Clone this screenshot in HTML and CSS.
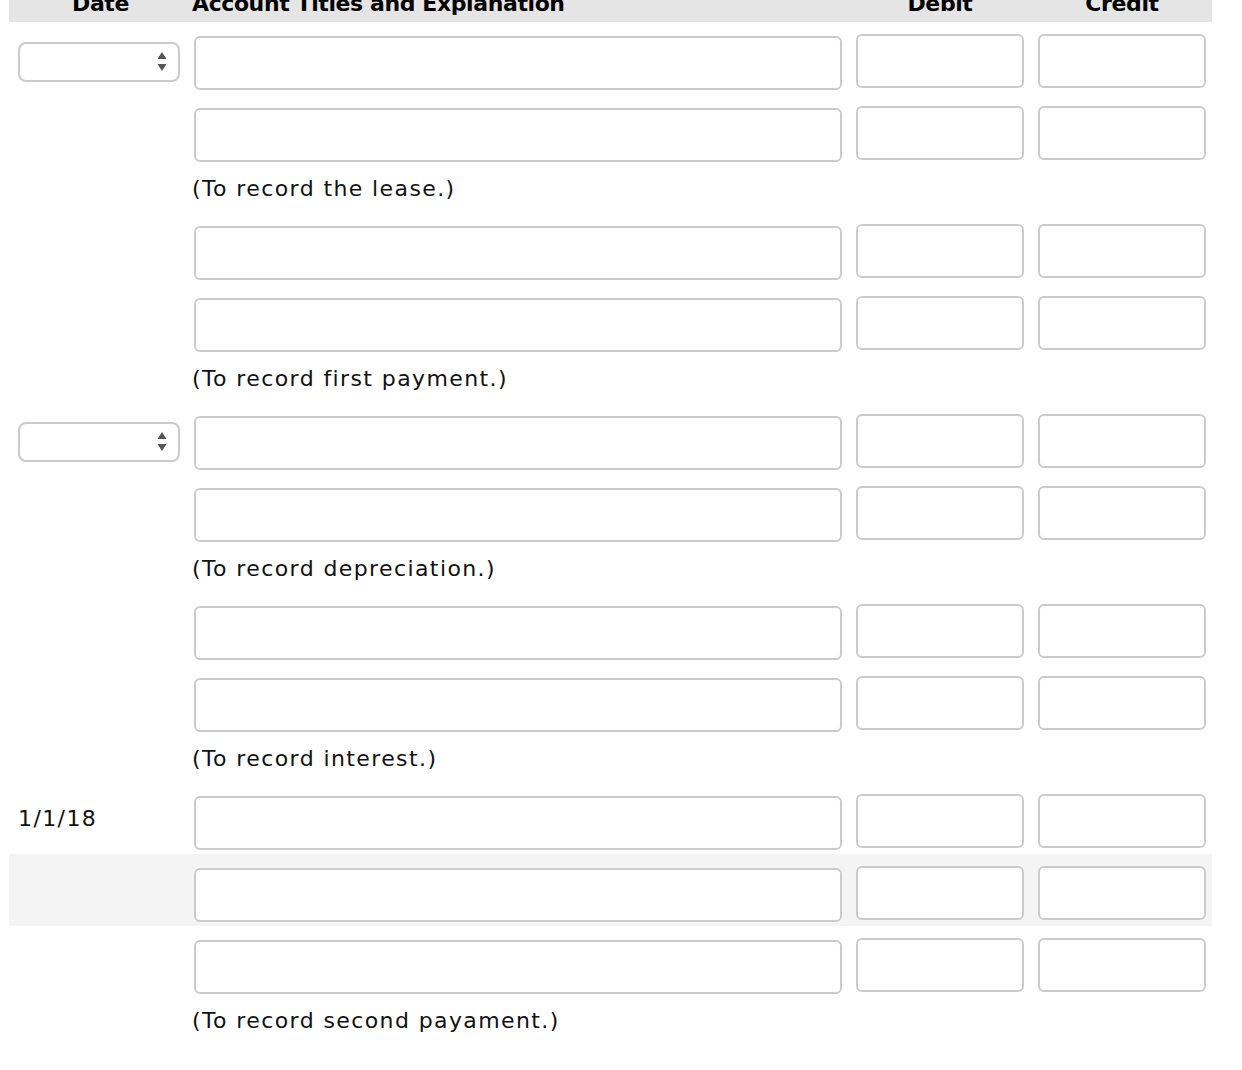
FILE: index.html
```html
<!DOCTYPE html>
<html lang="en">
  <head>
    <meta charset="UTF-8" />
    <title>Journal Entries</title>
    <link rel="stylesheet" href="styles.css">
  </head>
  <body>
    <div class="journal">
      <div class="journal-head">
        <div class="col-date">Date</div>
        <div class="col-account">Account Titles and Explanation</div>
        <div class="col-amount">Debit</div>
        <div class="col-amount">Credit</div>
      </div>

      <!-- entry 1 -->
      <div class="entry-row">
        <div class="date-cell">
          <div class="select-wrap">
            <select class="date-select"><option></option></select>
            <svg class="select-arrows" width="10" height="19" viewBox="0 0 10 19"><path d="M5 0 L9.5 7 L0.5 7 Z M0.5 12 L9.5 12 L5 19 Z" fill="#555"/></svg>
          </div>
        </div>
        <input class="account-input" type="text">
        <input class="amount-input" type="text">
        <input class="amount-input" type="text">
      </div>
      <div class="entry-row">
        <div class="date-cell"></div>
        <input class="account-input" type="text">
        <input class="amount-input" type="text">
        <input class="amount-input" type="text">
      </div>
      <div class="memo-row"><div></div><div class="memo">(To record the lease.)</div></div>

      <!-- entry 2 -->
      <div class="entry-row">
        <div class="date-cell"></div>
        <input class="account-input" type="text">
        <input class="amount-input" type="text">
        <input class="amount-input" type="text">
      </div>
      <div class="entry-row">
        <div class="date-cell"></div>
        <input class="account-input" type="text">
        <input class="amount-input" type="text">
        <input class="amount-input" type="text">
      </div>
      <div class="memo-row"><div></div><div class="memo">(To record first payment.)</div></div>

      <!-- entry 3 -->
      <div class="entry-row">
        <div class="date-cell">
          <div class="select-wrap">
            <select class="date-select"><option></option></select>
            <svg class="select-arrows" width="10" height="19" viewBox="0 0 10 19"><path d="M5 0 L9.5 7 L0.5 7 Z M0.5 12 L9.5 12 L5 19 Z" fill="#555"/></svg>
          </div>
        </div>
        <input class="account-input" type="text">
        <input class="amount-input" type="text">
        <input class="amount-input" type="text">
      </div>
      <div class="entry-row">
        <div class="date-cell"></div>
        <input class="account-input" type="text">
        <input class="amount-input" type="text">
        <input class="amount-input" type="text">
      </div>
      <div class="memo-row"><div></div><div class="memo">(To record depreciation.)</div></div>

      <!-- entry 4 -->
      <div class="entry-row">
        <div class="date-cell"></div>
        <input class="account-input" type="text">
        <input class="amount-input" type="text">
        <input class="amount-input" type="text">
      </div>
      <div class="entry-row">
        <div class="date-cell"></div>
        <input class="account-input" type="text">
        <input class="amount-input" type="text">
        <input class="amount-input" type="text">
      </div>
      <div class="memo-row"><div></div><div class="memo">(To record interest.)</div></div>

      <!-- entry 5 -->
      <div class="entry-row">
        <div class="date-cell date-text">1/1/18</div>
        <input class="account-input" type="text">
        <input class="amount-input" type="text">
        <input class="amount-input" type="text">
      </div>
      <div class="entry-row shaded">
        <div class="date-cell"></div>
        <input class="account-input" type="text">
        <input class="amount-input" type="text">
        <input class="amount-input" type="text">
      </div>
      <div class="entry-row">
        <div class="date-cell"></div>
        <input class="account-input" type="text">
        <input class="amount-input" type="text">
        <input class="amount-input" type="text">
      </div>
      <div class="memo-row"><div></div><div class="memo">(To record second payament.)</div></div>
    </div>
  </body>
</html>
```

FILE: styles.css
```css
body {
  margin: 0;
  font-family: "DejaVu Sans", Verdana, sans-serif;
  font-size: 22px;
  color: #111;
  background: #fff;
}
.journal {
  width: 1203px;
  margin-left: 9px;
  margin-top: -18px;
}
.journal-head,
.entry-row,
.memo-row {
  display: grid;
  grid-template-columns: 171px 648px 168px 168px;
  column-gap: 14px;
}
.journal-head {
  height: 40px;
  box-sizing: border-box;
  padding-top: 9px;
  line-height: 26px;
  background-color: #e5e5e5;
  font-weight: bold;
  letter-spacing: -0.4px;
  color: #000;
}
.col-date {
  text-align: center;
  padding-left: 12px;
}
.col-account {
  margin-left: -2px;
  white-space: nowrap;
}
.col-amount {
  text-align: center;
}

.entry-row {
  height: 72px;
}
.entry-row.shaded {
  background-color: #f4f4f4;
}
.account-input,
.amount-input {
  box-sizing: border-box;
  height: 54px;
  border: 2px solid #cbcbcb;
  border-radius: 6px;
  background: #fff;
  font: inherit;
  padding: 0 10px;
  outline: none;
}
.account-input {
  margin-top: 14px;
}
.amount-input {
  margin-top: 12px;
}

.select-wrap {
  position: relative;
  width: 162px;
  height: 40px;
  margin: 20px 0 0 9px;
}
.date-select {
  appearance: none;
  -webkit-appearance: none;
  box-sizing: border-box;
  width: 100%;
  height: 100%;
  border: 2px solid #cbcbcb;
  border-radius: 8px;
  background: #fff;
  font: inherit;
}
.select-arrows {
  position: absolute;
  right: 13px;
  top: 10px;
}
.date-text {
  padding: 24px 0 0 9px;
  line-height: 26px;
  letter-spacing: 1.4px;
  color: #111;
}

.memo-row {
  height: 46px;
  line-height: 46px;
}
.memo {
  margin-left: -2px;
  white-space: nowrap;
  letter-spacing: 1.4px;
  color: #111;
}
```
